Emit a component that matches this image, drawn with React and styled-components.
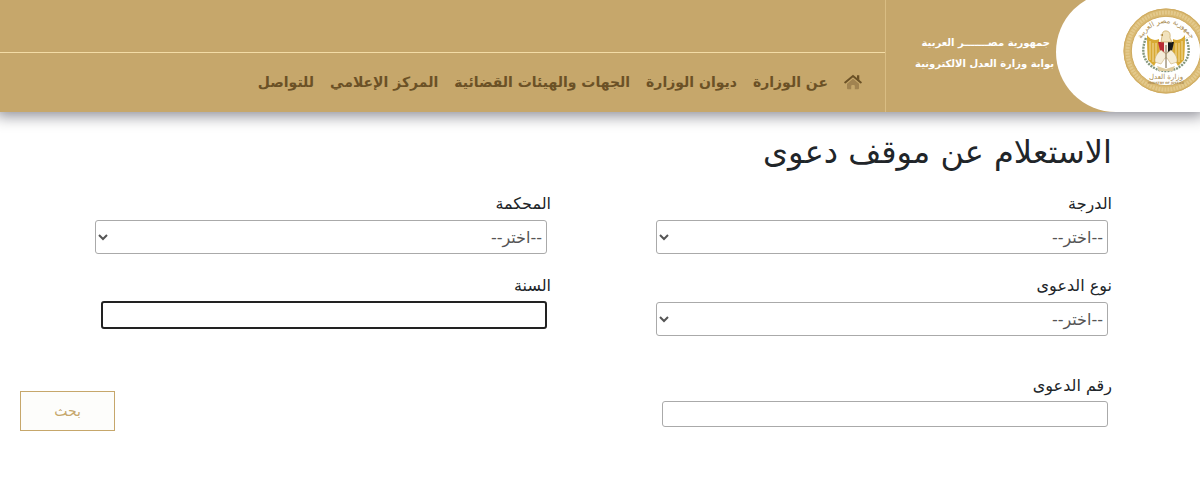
import React from 'react';
import styled, { createGlobalStyle } from 'styled-components';

const GlobalStyle = createGlobalStyle`
    * {
        box-sizing: border-box;
    }
    body {
        margin: 0;
        background: #fff;
        color: #212529;
        font-family: 'DejaVu Sans', sans-serif;
        font-size: 16px;
    }
`;

const Header = styled.header`
    display: flex;
    height: 112px;
    background: #c6a76b;
    box-shadow: 0 0 14px 4px rgba(0, 0, 20, 0.45);
`;

const Brand = styled.div`
    display: flex;
    flex: none;
    overflow: hidden;
`;

const LogoPanel = styled.div`
    display: flex;
    direction: ltr;
    width: 144px;
    height: 120px;
    margin-top: -8px;
    padding: 16px 0 0 67px;
    background: #fff;
    border-radius: 60px 0 0 60px;

    svg {
        flex: none;
    }
`;

const BrandText = styled.div`
    width: 171px;
    padding: 32px 2px 0 0;
    border-left: 1px solid #d9bd83;
    color: #fff;
    font-size: 10px;
    font-weight: bold;
    line-height: 21px;
    white-space: nowrap;

    p {
        margin: 0;
    }
    p:first-child {
        padding-right: 4px;
    }
`;

const HeaderMain = styled.div`
    display: flex;
    flex: 1;
    flex-direction: column;
`;

const TopBar = styled.div`
    height: 53px;
    border-bottom: 1px solid #f3dca6;
`;

const Nav = styled.nav`
    display: flex;
    flex: 1;
    align-items: center;
    gap: 16px;
    padding: 0 23px 2px 0;

    a {
        color: #6b5126;
        font-size: 14px;
        font-weight: bold;
        text-decoration: none;
        white-space: nowrap;
    }
    svg {
        display: block;
    }
`;

const Main = styled.main`
    padding: 18px 88px 40px 0;
`;

const Title = styled.h1`
    margin: 0;
    font-size: 32px;
    font-weight: normal;
    line-height: 44px;
`;

const Form = styled.form`
    display: grid;
    grid-template-columns: 1fr 1fr;
    column-gap: 10px;
    padding-top: 18px;
`;

const Field = styled.div`
    display: flex;
    flex-direction: column;
    min-height: ${props => (props.$tall ? '100px' : '82px')};

    label {
        line-height: 24px;
        margin-bottom: ${props => (props.$text ? '3px' : '4px')};
    }
`;

const Select = styled.select`
    width: 82%;
    height: 34px;
    margin-right: 4px;
    border: 1px solid #aaa;
    border-radius: 3px;
    background: #fff;
    color: #555;
    font-family: inherit;
    font-size: 16px;
`;

const Input = styled.input`
    width: 81%;
    height: ${props => (props.$active ? '28px' : '26px')};
    margin-right: 4px;
    border: ${props => (props.$active ? '2px solid #222' : '1px solid #aaa')};
    border-radius: 3px;
    background: #fff;
    font-family: inherit;
    font-size: 16px;
`;

const Actions = styled.div`
    display: flex;
    justify-content: flex-end;
    align-items: flex-start;
    padding: 17px 0 0 20px;
`;

const SearchButton = styled.button`
    width: 95px;
    height: 40px;
    border: 1px solid #c6a76b;
    background: #fdfdfb;
    color: #c6a76b;
    font-family: inherit;
    font-size: 14px;
`;

const HomeIcon = () => (
    <svg width="18" height="16" viewBox="0 0 18 16" aria-hidden="true">
        <path d="M9 4.8 L15 9.8 V14.2 Q15 15.2 14 15.2 H10.8 V12 Q10.8 11 9.8 11 H8.2 Q7.2 11 7.2 12 V15.2 H4 Q3 15.2 3 14.2 V9.8 Z" fill="#a18350" />
        <path d="M1.2 8.4 L9 1.9 L16.8 8.4" fill="none" stroke="#6b5126" strokeWidth="2" strokeLinecap="round" strokeLinejoin="round" />
        <path d="M13 1.2 H15.3 V6.5 L13 4.6 Z" fill="#6b5126" />
    </svg>
);

const Emblem = () => (
    <svg width="86" height="86" viewBox="0 0 86 86" role="img" aria-label="وزارة العدل">
        <circle cx="43" cy="43" r="38.5" fill="#fff" stroke="#d9b972" strokeWidth="8" />
        <circle cx="43" cy="43" r="38.5" fill="none" stroke="#e3c98c" strokeWidth="4" strokeDasharray="2 1" />
        <circle cx="43" cy="43" r="42" fill="none" stroke="#cfab60" />
        <circle cx="43" cy="43" r="34.7" fill="none" stroke="#cfab60" />
        <path id="emblem-arc" d="M18 32 A 27 27 0 0 1 68 32" fill="none" />
        <text fill="#a98b51" fontSize="7" textAnchor="middle" direction="rtl">
            <textPath href="#emblem-arc" startOffset="50%">جمهورية مصر العربية</textPath>
        </text>
        <path d="M23 30 Q16 47 27 57 Q34 63 43 63 Q52 63 59 57 Q70 47 63 30" fill="none" stroke="#84977d" strokeWidth="2.4" strokeDasharray="2 1" />
        <path d="M36 31 Q29 34 24 27 Q24 42 25 52 L31 58 L37 47 Z" fill="#d8aa34" />
        <path d="M50 31 Q57 34 62 27 Q62 42 61 52 L55 58 L49 47 Z" fill="#d8aa34" />
        <path d="M27 33 V52 M30 35 V54 M33 35 V50 M59 33 V52 M56 35 V54 M53 35 V50" stroke="#f5dda0" />
        <path d="M35 34 H43 V48 L37 43 Z" fill="#b72a34" />
        <path d="M43 34 H51 L49 43 L43 48 Z" fill="#16191b" />
        <path d="M41 34 H45 V43 L43 49 L41 43 Z" fill="#f4eee0" />
        <path d="M39 28 Q39 22 44 23 Q48 24 47 30 L49 34 H38 Z" fill="#f1e2bd" stroke="#c9a85f" strokeWidth="0.7" />
        <path d="M40 26 L37 27 L40 28" fill="#a67c2e" />
        <path d="M38 42 Q31 48 32 54 L38 56 L42 50 L44 50 L48 56 L54 54 Q55 48 48 42 L43 46 Z" fill="#f5edd8" stroke="#cbb078" strokeWidth="0.6" />
        <path d="M43 37 V60" stroke="#776341" />
        <path d="M34 58 L43 61 L52 58 L50 63 H36 Z" fill="#dfcc9e" />
        <text x="43" y="71" fill="#a98b51" fontSize="7" textAnchor="middle" direction="rtl">وزارة العدل</text>
        <text x="43" y="76" fill="#a98b51" fontSize="3" fontWeight="bold" textAnchor="middle">MINISTRY OF JUSTICE</text>
    </svg>
);

const links = [
    'عن الوزارة',
    'ديوان الوزارة',
    'الجهات والهيئات القضائية',
    'المركز الإعلامي',
    'للتواصل',
];

const SelectField = ({ id, label, tall }) => (
    <Field $tall={tall}>
        <label htmlFor={id}>{label}</label>
        <Select id={id} name={id}>
            <option>--اختر--</option>
        </Select>
    </Field>
);

const InputField = ({ id, label, active }) => (
    <Field $text>
        <label htmlFor={id}>{label}</label>
        <Input id={id} name={id} type="text" $active={active} />
    </Field>
);

const App = () => {

    return (
        <div dir="rtl" lang="ar">
            <GlobalStyle />
            <Header>
                <Brand>
                    <LogoPanel>
                        <Emblem />
                    </LogoPanel>
                    <BrandText>
                        <p>جمهورية مصـــــــر العربية</p>
                        <p>بوابة وزارة العدل الالكترونية</p>
                    </BrandText>
                </Brand>
                <HeaderMain>
                    <TopBar />
                    <Nav>
                        <a href="#home" aria-label="الرئيسية"><HomeIcon /></a>
                        {links.map(link => (
                            <a href="#menu" key={link}>{link}</a>
                        ))}
                    </Nav>
                </HeaderMain>
            </Header>
            <Main>
                <Title>الاستعلام عن موقف دعوى</Title>
                <Form>
                    <SelectField id="degree" label="الدرجة" />
                    <SelectField id="court" label="المحكمة" />
                    <SelectField id="caseType" label="نوع الدعوى" tall />
                    <InputField id="year" label="السنة" active />
                    <InputField id="caseNumber" label="رقم الدعوى" />
                    <Actions>
                        <SearchButton type="button">بحث</SearchButton>
                    </Actions>
                </Form>
            </Main>
        </div>
    )
}

export default App;
